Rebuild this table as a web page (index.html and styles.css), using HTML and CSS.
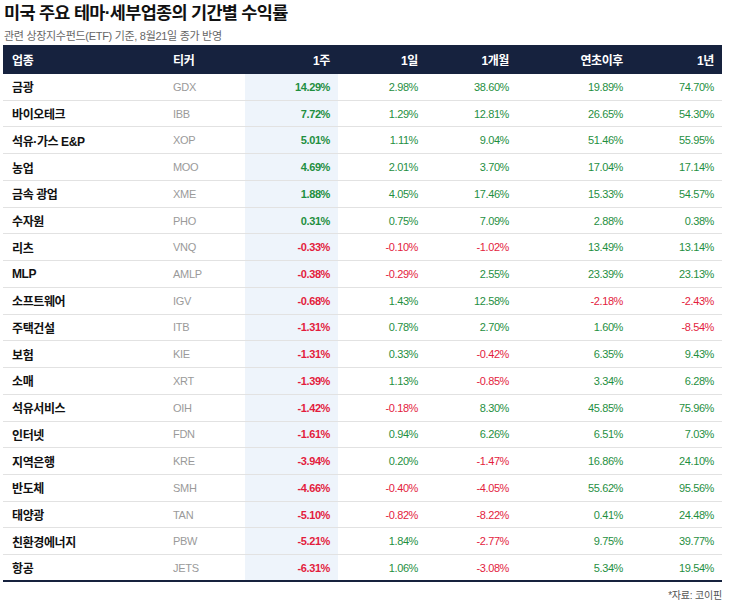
FILE: index.html
```html
<!DOCTYPE html>
<html lang="ko">
<head>
<meta charset="utf-8">
<title>미국 주요 테마·세부업종의 기간별 수익률</title>
<link rel="stylesheet" href="styles.css">
</head>
<body>
<div class="wrap">
  <h1 class="title">미국 주요 테마·세부업종의 기간별 수익률</h1>
  <p class="sub">관련 상장지수펀드(ETF) 기준, 8월21일 종가 반영</p>
  <div class="tbl">
    <div class="row head">
      <div class="c name">업종</div><div class="c tick">티커</div><div class="c num wk">1주</div><div class="c num">1일</div><div class="c num">1개월</div><div class="c num">연초이후</div><div class="c num">1년</div>
    </div>
    <div class="row"><div class="c name">금광</div><div class="c tick">GDX</div><div class="c num wk up">14.29%</div><div class="c num up">2.98%</div><div class="c num up">38.60%</div><div class="c num up">19.89%</div><div class="c num up">74.70%</div></div>
    <div class="row"><div class="c name">바이오테크</div><div class="c tick">IBB</div><div class="c num wk up">7.72%</div><div class="c num up">1.29%</div><div class="c num up">12.81%</div><div class="c num up">26.65%</div><div class="c num up">54.30%</div></div>
    <div class="row"><div class="c name">석유·가스 E&amp;P</div><div class="c tick">XOP</div><div class="c num wk up">5.01%</div><div class="c num up">1.11%</div><div class="c num up">9.04%</div><div class="c num up">51.46%</div><div class="c num up">55.95%</div></div>
    <div class="row"><div class="c name">농업</div><div class="c tick">MOO</div><div class="c num wk up">4.69%</div><div class="c num up">2.01%</div><div class="c num up">3.70%</div><div class="c num up">17.04%</div><div class="c num up">17.14%</div></div>
    <div class="row"><div class="c name">금속 광업</div><div class="c tick">XME</div><div class="c num wk up">1.88%</div><div class="c num up">4.05%</div><div class="c num up">17.46%</div><div class="c num up">15.33%</div><div class="c num up">54.57%</div></div>
    <div class="row"><div class="c name">수자원</div><div class="c tick">PHO</div><div class="c num wk up">0.31%</div><div class="c num up">0.75%</div><div class="c num up">7.09%</div><div class="c num up">2.88%</div><div class="c num up">0.38%</div></div>
    <div class="row"><div class="c name">리츠</div><div class="c tick">VNQ</div><div class="c num wk dn">-0.33%</div><div class="c num dn">-0.10%</div><div class="c num dn">-1.02%</div><div class="c num up">13.49%</div><div class="c num up">13.14%</div></div>
    <div class="row"><div class="c name">MLP</div><div class="c tick">AMLP</div><div class="c num wk dn">-0.38%</div><div class="c num dn">-0.29%</div><div class="c num up">2.55%</div><div class="c num up">23.39%</div><div class="c num up">23.13%</div></div>
    <div class="row"><div class="c name">소프트웨어</div><div class="c tick">IGV</div><div class="c num wk dn">-0.68%</div><div class="c num up">1.43%</div><div class="c num up">12.58%</div><div class="c num dn">-2.18%</div><div class="c num dn">-2.43%</div></div>
    <div class="row"><div class="c name">주택건설</div><div class="c tick">ITB</div><div class="c num wk dn">-1.31%</div><div class="c num up">0.78%</div><div class="c num up">2.70%</div><div class="c num up">1.60%</div><div class="c num dn">-8.54%</div></div>
    <div class="row"><div class="c name">보험</div><div class="c tick">KIE</div><div class="c num wk dn">-1.31%</div><div class="c num up">0.33%</div><div class="c num dn">-0.42%</div><div class="c num up">6.35%</div><div class="c num up">9.43%</div></div>
    <div class="row"><div class="c name">소매</div><div class="c tick">XRT</div><div class="c num wk dn">-1.39%</div><div class="c num up">1.13%</div><div class="c num dn">-0.85%</div><div class="c num up">3.34%</div><div class="c num up">6.28%</div></div>
    <div class="row"><div class="c name">석유서비스</div><div class="c tick">OIH</div><div class="c num wk dn">-1.42%</div><div class="c num dn">-0.18%</div><div class="c num up">8.30%</div><div class="c num up">45.85%</div><div class="c num up">75.96%</div></div>
    <div class="row"><div class="c name">인터넷</div><div class="c tick">FDN</div><div class="c num wk dn">-1.61%</div><div class="c num up">0.94%</div><div class="c num up">6.26%</div><div class="c num up">6.51%</div><div class="c num up">7.03%</div></div>
    <div class="row"><div class="c name">지역은행</div><div class="c tick">KRE</div><div class="c num wk dn">-3.94%</div><div class="c num up">0.20%</div><div class="c num dn">-1.47%</div><div class="c num up">16.86%</div><div class="c num up">24.10%</div></div>
    <div class="row"><div class="c name">반도체</div><div class="c tick">SMH</div><div class="c num wk dn">-4.66%</div><div class="c num dn">-0.40%</div><div class="c num dn">-4.05%</div><div class="c num up">55.62%</div><div class="c num up">95.56%</div></div>
    <div class="row"><div class="c name">태양광</div><div class="c tick">TAN</div><div class="c num wk dn">-5.10%</div><div class="c num dn">-0.82%</div><div class="c num dn">-8.22%</div><div class="c num up">0.41%</div><div class="c num up">24.48%</div></div>
    <div class="row"><div class="c name">친환경에너지</div><div class="c tick">PBW</div><div class="c num wk dn">-5.21%</div><div class="c num up">1.84%</div><div class="c num dn">-2.77%</div><div class="c num up">9.75%</div><div class="c num up">39.77%</div></div>
    <div class="row last"><div class="c name">항공</div><div class="c tick">JETS</div><div class="c num wk dn">-6.31%</div><div class="c num up">1.06%</div><div class="c num dn">-3.08%</div><div class="c num up">5.34%</div><div class="c num up">19.54%</div></div>
  </div>
  <p class="src">*자료: 코이핀</p>
</div>
</body>
</html>
```

FILE: styles.css
```css
* { box-sizing: border-box; }
html, body { margin: 0; padding: 0; background: #fff; }
body {
  font-family: "Liberation Sans", "Noto Sans CJK KR", sans-serif;
  color: #111;
}
.wrap {
  width: 729px;
  padding: 0 7px 0 3px;
}
.title {
  margin: 0;
  padding-left: 1px;
  font-size: 17.5px;
  line-height: 26px;
  font-weight: 700;
  letter-spacing: -0.7px;
  color: #111;
}
.sub {
  margin: 2px 0 1px;
  padding-left: 1px;
  font-size: 11px;
  line-height: 16px;
  color: #666;
  letter-spacing: -0.3px;
}
.tbl {
  width: 719px;
}
.row {
  display: grid;
  grid-template-columns: 162px 80px 93px 88px 91px 114px 91px;
  height: 26.74px;
  border-bottom: 1px solid #e2e2e2;
  align-items: stretch;
}
.row.head {
  height: 29px;
  background: #16223e;
  border-bottom: none;
}
.row.last {
  border-bottom: 2px solid #16223e;
}
.c {
  display: flex;
  align-items: center;
  font-size: 11px;
  white-space: nowrap;
}
.name {
  padding-left: 9px;
  font-size: 12px;
  font-weight: 700;
  letter-spacing: -0.4px;
  color: #111;
}
.tick {
  padding-left: 8px;
  color: #9a9a9a;
  letter-spacing: -0.3px;
}
.num {
  justify-content: flex-end;
  padding-right: 8px;
  letter-spacing: -0.4px;
}
.wk {
  background: #eef4fb;
  font-weight: 700;
}
.head .c {
  color: #fff;
  font-size: 12px;
  font-weight: 700;
  letter-spacing: -0.4px;
  background: transparent;
}
.up { color: #1f8f3f; }
.dn { color: #e31c3d; }
.src {
  margin: 8px 0 0;
  text-align: right;
  font-size: 10px;
  line-height: 12px;
  color: #555;
  letter-spacing: -0.2px;
}
```
